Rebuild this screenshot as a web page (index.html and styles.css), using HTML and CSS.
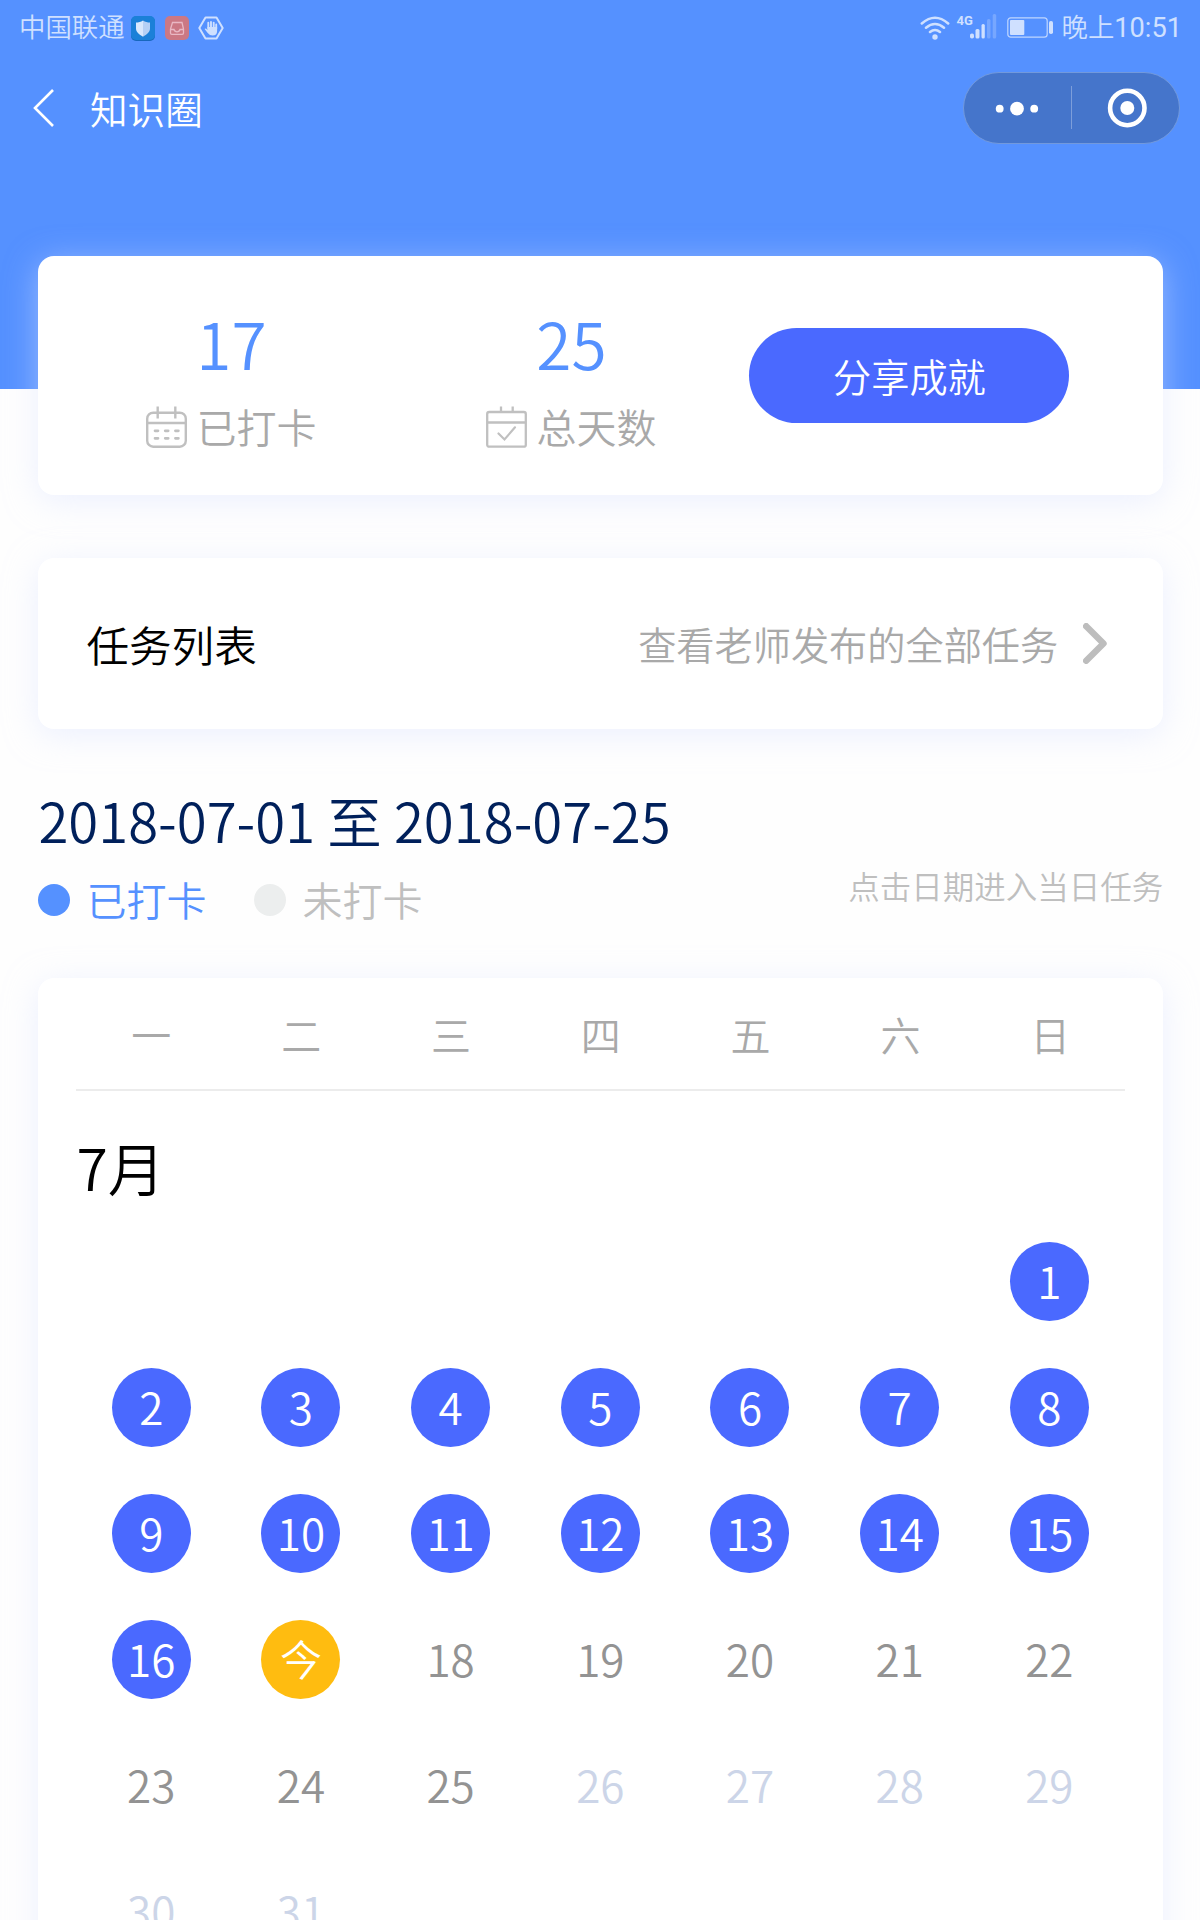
FILE: index.html
```html
<!DOCTYPE html>
<html lang="zh-CN">
<head>
<meta charset="utf-8">
<title>知识圈</title>
<link rel="stylesheet" href="styles.css">
</head>
<body>
<div class="screen">
  <header class="hero">
    <div class="status">
      <span class="carrier">中国联通</span>
      <svg class="app-icon" width="24" height="25" viewBox="0 0 24 25"><rect y=".5" width="24" height="24.5" rx="5" fill="#1767bd"/><rect width="24" height="24" rx="5" fill="#1b80d8"/><path d="M12 4.5c2.2 1.6 4.600 2 7 2v6c0 3.500-3 6-7 8.200z" fill="#b5d0f5"/><path d="M12 4.500c-2.200 1.600-4.600 2-7 2v6c0 3.500 3 6 7 8.200z" fill="#d8e8fd"/></svg>
      <svg class="app-icon mail" width="24" height="24" viewBox="0 0 24 24"><rect width="24" height="24" rx="5" fill="#cb7884"/><path d="M7.500 6.500h9.500l1.500 6.500v4q0 1.300-1.300 1.300H6.800q-1.300 0-1.300-1.300v-4zM5.500 13.500H9q.6 2.300 3 2.300t3-2.300h3.500" fill="none" stroke="#e9b8c4" stroke-width="1.300"/></svg>
      <svg class="app-icon hand" width="26" height="24" viewBox="0 0 26 24"><path d="M7.500 1.500h11L24.700 12l-6.200 10.500h-11L1.300 12z" fill="none" stroke="#cfe0ff" stroke-width="2" stroke-linejoin="round"/><path d="M10.300 12V6.800M13 12V6M15.700 12V6.600M18.200 13V8.500" stroke="#cfe0ff" stroke-width="1.900" stroke-linecap="round"/><path d="M9.400 11h9.700v4q0 4.500-4.600 4.500-3 0-5-2.800L6.600 13q.8-1.200 2.800 1z" fill="#cfe0ff"/></svg>
      <div class="status-right">
        <svg width="30" height="24" viewBox="0 0 30 24"><g fill="none" stroke="#cfe0ff" stroke-width="2.500" stroke-linecap="round"><path d="M1.800 7.500q13.200-11.500 26.400 0M6 11.800q9-7.600 18 0M10 16q5-4 10 0"/></g><circle cx="15" cy="21" r="2.700" fill="#cfe0ff"/></svg>
        <span class="net">4G</span>
        <svg class="bars" width="27" height="25" viewBox="0 0 27 25" fill="#cfe0ff"><rect x="0" y="19.500" width="4" height="5" rx="1.800"/><rect x="5.500" y="15" width="4" height="9.500" rx="1.500"/><rect x="11.500" y="10" width="3.300" height="14.500" rx="1.500"/><g opacity=".28"><rect x="17" y="5" width="3.500" height="19.500" rx="1.500"/><rect x="22.700" y="0" width="3.500" height="24.500" rx="1.500"/></g></svg>
        <svg class="battery" width="46" height="21" viewBox="0 0 46 21"><rect x=".8" y=".8" width="39.400" height="19.400" rx="3" fill="none" stroke="#bfd6ff" stroke-width="1.200"/><rect x="3" y="3" width="14.300" height="15" rx="1" fill="#cfe0ff"/><rect x="42" y="4" width="4" height="13" rx="1.800" fill="#cfe0ff"/></svg>
        <span class="clock">晚上<span class="time">10:51</span></span>
      </div>
    </div>
    <nav class="nav">
      <svg class="back" width="22" height="40" viewBox="0 0 22 40"><path d="M20 2 2 20l18 18" fill="none" stroke="#fff" stroke-width="2.600"/></svg>
      <h1 class="nav-title">知识圈</h1>
      <div class="capsule">
        <svg width="215" height="70" viewBox="0 0 215 70" fill="#fff"><circle cx="35.700" cy="35.700" r="3.900"/><circle cx="53" cy="35.700" r="6.900"/><circle cx="70.200" cy="35.700" r="3.900"/><rect x="107" y="13" width="1" height="43" opacity=".3"/><circle cx="163.300" cy="35" r="17.200" fill="none" stroke="#fff" stroke-width="4.600"/><circle cx="163.300" cy="35" r="7"/></svg>
      </div>
    </nav>
  </header>

  <main class="content">
    <section class="card stats">
      <div class="stat">
        <div class="stat-value">17</div>
        <div class="stat-label">
          <svg width="41" height="42" viewBox="0 0 41 42" fill="none" stroke="#c0c0c0" stroke-width="2.400"><rect x="1.200" y="6.700" width="38.600" height="34" rx="6"/><path d="M1 17h39M11.700.5v12M29.300.5v12"/><path d="M9 24.800h3M19.200 24.800h3M29.400 24.800h3M9 32.300h3M19.200 32.300h3M29.400 32.300h3" stroke-width="2.700" stroke-linecap="round"/></svg>
          <span>已打卡</span>
        </div>
      </div>
      <div class="stat">
        <div class="stat-value">25</div>
        <div class="stat-label">
          <svg width="41" height="42" viewBox="0 0 41 42" fill="none" stroke="#c0c0c0" stroke-width="2.300"><rect x="1.200" y="6" width="38.600" height="34.700" rx="2"/><path d="M1 16.500h39M15 .5v5M26.700.5v5"/><path d="m12.500 27.500 6 6L29 21.300" stroke-width="2.200" stroke-linecap="round"/></svg>
          <span>总天数</span>
        </div>
      </div>
      <button class="share">分享成就</button>
    </section>

    <section class="card tasks">
      <h2 class="tasks-title">任务列表</h2>
      <span class="tasks-more">查看老师发布的全部任务</span>
      <svg class="chevron" width="24" height="41" viewBox="0 0 24 41"><path d="M3.200 3.200 20.500 20.500 3.200 37.800" fill="none" stroke="#bdbdbd" stroke-width="6.400" stroke-linecap="round" stroke-linejoin="round"/></svg>
    </section>

    <section class="period">
      <h2 class="range">2018-07-01 至 2018-07-25</h2>
      <div class="legend">
        <span class="key done"><i class="dot"></i>已打卡</span>
        <span class="key"><i class="dot"></i>未打卡</span>
        <span class="hint">点击日期进入当日任务</span>
      </div>
    </section>

    <section class="card calendar">
      <div class="week"><span>一</span><span>二</span><span>三</span><span>四</span><span>五</span><span>六</span><span>日</span></div>
      <h3 class="month">7月</h3>
      <div class="days">
        <span class="day done first">1</span>
        <span class="day done">2</span><span class="day done">3</span><span class="day done">4</span><span class="day done">5</span><span class="day done">6</span><span class="day done">7</span><span class="day done">8</span>
        <span class="day done">9</span><span class="day done">10</span><span class="day done">11</span><span class="day done">12</span><span class="day done">13</span><span class="day done">14</span><span class="day done">15</span>
        <span class="day done">16</span><span class="day today">今</span><span class="day">18</span><span class="day">19</span><span class="day">20</span><span class="day">21</span><span class="day">22</span>
        <span class="day">23</span><span class="day">24</span><span class="day">25</span><span class="day out">26</span><span class="day out">27</span><span class="day out">28</span><span class="day out">29</span>
        <span class="day out">30</span><span class="day out">31</span>
      </div>
    </section>
  </main>
</div>
</body>
</html>
```
FILE: styles.css
```css
* { box-sizing: border-box; }

body {
  margin: 0;
  background: #fefefe;
  font-family: "Noto Sans CJK SC", sans-serif;
  font-weight: 350;
}

h1, h2, h3 { margin: 0; font-weight: inherit; }
svg { display: block; flex: none; }

.screen { height: 1920px; overflow: hidden; }

.hero { height: 389px; background: #5591ff; }

.status {
  display: flex;
  align-items: center;
  height: 56px;
  padding: 0 18px 0 19px;
  color: #cfe0ff;
  font-size: 26.4px;
  line-height: 52px;
}
.carrier { width: 112px; padding-bottom: 4px; }
.app-icon.mail { margin-left: 10px; }
.app-icon.hand { margin-left: 9px; }
.status-right { display: flex; align-items: center; margin-left: auto; }
.net {
  align-self: flex-start;
  width: 14px;
  margin: 14px 0 0 7px;
  font: 700 13px/14px Roboto, sans-serif;
}
.bars { margin-left: -1px; margin-top: -3px; }
.battery { margin-left: 10px; margin-top: -1px; }
.clock { margin-left: 9px; padding-bottom: 3px; }
.time { font-family: Roboto, sans-serif; font-size: 27.2px; font-weight: 400; }

.nav { display: flex; align-items: center; height: 104px; padding: 0 20px 0 33px; }
.nav-title { margin-left: 35px; color: #fff; font-size: 37.6px; line-height: 56px; }
.capsule {
  width: 217px;
  height: 72px;
  margin-left: auto;
  border: 1px solid #7299dc;
  border-radius: 36px;
  background: #4575cb;
}

.content { margin-top: -132.6px; padding: 0 36.8px 0 38.4px; }
.card { border-radius: 16px; background: #fff; box-shadow: 0 6px 32px rgba(220, 228, 255, .5); }

.stats { display: flex; height: 239px; padding-left: 23px; }
.stat { width: 340px; padding-top: 46px; text-align: center; }
.stat-value { color: #5591ff; font-size: 64px; line-height: 80px; }
.stat-label {
  display: flex;
  align-items: center;
  justify-content: center;
  gap: 9px;
  margin-top: 16px;
  color: #a9a9a9;
  font-size: 40px;
  line-height: 56px;
}
.stat-label svg { margin-top: 2px; }
.share {
  width: 320px;
  height: 95px;
  margin: 72px 0 0 8px;
  padding: 0;
  border: 0;
  border-radius: 48px;
  background: #4a69ff;
  color: #fff;
  font: inherit;
  font-size: 38.2px;
}

.tasks { display: flex; align-items: center; height: 171px; margin-top: 63px; padding: 0 56px 0 48px; }
.tasks-title { font-size: 42.6px; line-height: 60px; color: #000; }
.tasks-more { margin-left: auto; color: #a9a9a9; font-size: 38.2px; line-height: 60px; }
.chevron { margin-left: 25px; }

.period { height: 249px; padding-top: 52px; }
.range { color: #00205b; font-size: 54.5px; line-height: 77px; }
.legend { display: flex; align-items: center; height: 56px; margin-top: 13px; color: #bfbfbf; font-size: 40px; line-height: 56px; }
.key { display: flex; align-items: center; gap: 16px; margin-right: 48px; }
.key.done { color: #5591ff; }
.dot { width: 32px; height: 32px; margin-top: 2px; border-radius: 50%; background: #eceeee; }
.done .dot { background: #5591ff; }
.hint { margin: -29px 0 0 auto; font-size: 31.5px; }

.calendar { height: 1000px; padding: 0 38px; }
.week {
  display: grid;
  grid-template-columns: repeat(7, 1fr);
  height: 113px;
  border-bottom: 2px solid #ececec;
  color: #a9a9a9;
  font-size: 40px;
  line-height: 113px;
  text-align: center;
}
.month { margin-top: 35px; color: #000; font-size: 57px; line-height: 80px; }
.days {
  display: grid;
  grid-template-columns: repeat(7, 1fr);
  row-gap: 47px;
  justify-items: center;
  margin: 36px 1px 0 0;
}
.day { width: 79px; height: 79px; border-radius: 50%; color: #939393; font-size: 44px; line-height: 77px; text-align: center; }
.first { grid-column: 7; }
.day.done { background: #4a69ff; color: #fff; }
.day.today { background: #ffbc10; color: #fff; font-size: 42px; line-height: 75px; }
.day.out { color: #ccd5e8; }
```
